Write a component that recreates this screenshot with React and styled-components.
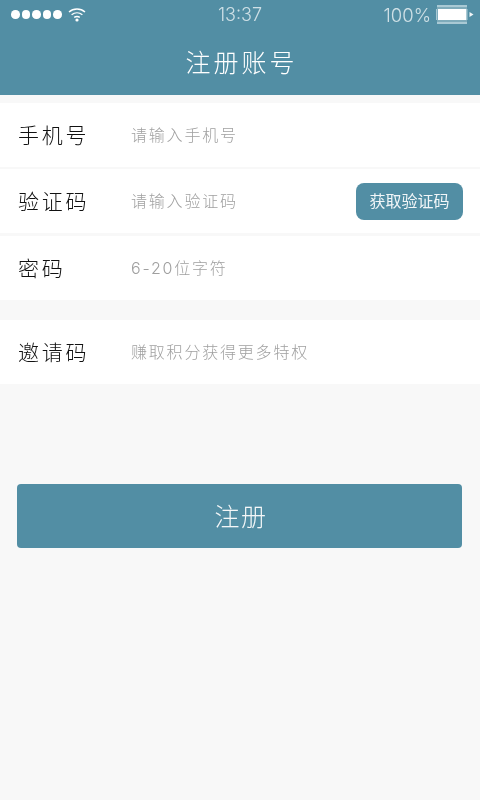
import React from 'react';
import styled, { createGlobalStyle } from 'styled-components';

const GlobalStyle = createGlobalStyle`
  html, body {
    margin: 0;
    padding: 0;
    background: #f8f8f8;
  }
  * {
    box-sizing: border-box;
  }
`;

const cjk = `"Inter", "Noto Sans CJK SC", sans-serif`;

const Page = styled.div`
  width: 480px;
  height: 800px;
  overflow: hidden;
  background: #f8f8f8;
  font-family: ${cjk};
  will-change: transform;
`;

const Header = styled.header`
  height: 95px;
  background: #528ea4;
  color: #fff;
`;

const StatusBar = styled.div`
  height: 29px;
  padding: 0 11px;
  display: grid;
  grid-template-columns: 1fr auto 1fr;
  align-items: center;
`;

const Signal = styled.div`
  display: flex;
  align-items: center;
  gap: 6px;
`;

const Dots = styled.div`
  display: flex;
  gap: 2px;
`;

const Dot = styled.span`
  width: 8.5px;
  height: 8.5px;
  border-radius: 50%;
  background: #fff;
`;

const Clock = styled.span`
  font-weight: 300;
  font-size: 18px;
  color: #cfe0e6;
`;

const Power = styled.div`
  display: flex;
  justify-content: flex-end;
  align-items: center;
  gap: 5px;
  margin-right: -5px;
  font-weight: 300;
  font-size: 18.5px;
  color: #cfe0e6;
`;

const Title = styled.h1`
  margin: 0;
  padding-left: 3px;
  text-align: center;
  font-size: 25px;
  line-height: 68px;
  height: 66px;
  font-weight: 300;
  letter-spacing: 3px;
`;

const Group = styled.section`
  margin-top: ${(p) => p.$top}px;
  display: flex;
  flex-direction: column;
`;

const Row = styled.div`
  height: 64px;
  margin-top: ${(p) => p.$gap || 0}px;
  background: #fff;
  padding: 0 17px 2px 18px;
  display: flex;
  align-items: center;
`;

const Label = styled.label`
  width: 113px;
  flex: none;
  font-size: 21px;
  letter-spacing: 2.7px;
  font-weight: 300;
  color: #111;
`;

const Hint = styled.span`
  flex: 1;
  font-size: 16px;
  letter-spacing: 1.8px;
  font-weight: 300;
  color: #a0a0a0;
`;

const CodeButton = styled.button`
  width: 107px;
  height: 37px;
  margin-top: 2px;
  border: none;
  border-radius: 8px;
  background: #528ea4;
  color: #f2f6f8;
  font-family: inherit;
  font-size: 16px;
  font-weight: 400;
  padding: 0 0 3px;
`;

const Submit = styled.button`
  display: block;
  width: 445px;
  height: 64px;
  margin: 100px 0 0 17px;
  border: none;
  border-radius: 4px;
  background: #528ea4;
  color: #f4f7f8;
  font-family: inherit;
  font-size: 25px;
  font-weight: 300;
  letter-spacing: 1.5px;
  padding: 0 0 3px 3px;
`;

const WifiIcon = () => (
  <svg width="18" height="15" viewBox="0 0 18 15" fill="none" stroke="#fff">
    <path d="M1 5C5.5 1 12.5 1 17 5" strokeWidth="1.4" />
    <path d="M3.6 7.8C6.8 5.2 11.2 5.2 14.4 7.8" strokeWidth="1.4" />
    <path d="M6.2 10.4C8 9.2 10 9.2 11.8 10.4" strokeWidth="1.4" />
    <circle cx="9" cy="13" r="1.6" fill="#fff" stroke="none" />
  </svg>
);

const BatteryIcon = () => (
  <svg width="38" height="19" viewBox="0 0 38 19">
    <rect x="1" y="0" width="30" height="2" fill="#a9c9d4" />
    <rect x="1" y="2" width="30" height="2" fill="#7fabba" />
    <rect x="1" y="15" width="30" height="2" fill="#7fabba" />
    <rect x="1" y="17" width="30" height="2" fill="#a9c9d4" />
    <rect x="0" y="4" width="1.5" height="11" fill="#a9c9d4" />
    <rect x="30" y="4" width="1.5" height="11" fill="#a9c9d4" />
    <rect x="2" y="4" width="28" height="11" fill="#fff" />
    <path d="M33.5 7L37.5 9.5L33.5 12Z" fill="#f0f5f7" />
  </svg>
);

const fields = [
  { label: '手机号', hint: '请输入手机号', gap: 0 },
  { label: '验证码', hint: '请输入验证码', gap: 2, code: true },
  { label: '密码', hint: '6-20位字符', gap: 3 },
];

export default function App() {
  return (
    <Page>
      <GlobalStyle />
      <Header>
        <StatusBar>
          <Signal>
            <Dots>
              {[0, 1, 2, 3, 4].map((i) => (
                <Dot key={i} />
              ))}
            </Dots>
            <WifiIcon />
          </Signal>
          <Clock>13:37</Clock>
          <Power>
            100%
            <BatteryIcon />
          </Power>
        </StatusBar>
        <Title>注册账号</Title>
      </Header>
      <Group $top={8}>
        {fields.map((f) => (
          <Row key={f.label} $gap={f.gap}>
            <Label>{f.label}</Label>
            <Hint>{f.hint}</Hint>
            {f.code && <CodeButton>获取验证码</CodeButton>}
          </Row>
        ))}
      </Group>
      <Group $top={20}>
        <Row>
          <Label>邀请码</Label>
          <Hint>赚取积分获得更多特权</Hint>
        </Row>
      </Group>
      <Submit>注册</Submit>
    </Page>
  );
}
